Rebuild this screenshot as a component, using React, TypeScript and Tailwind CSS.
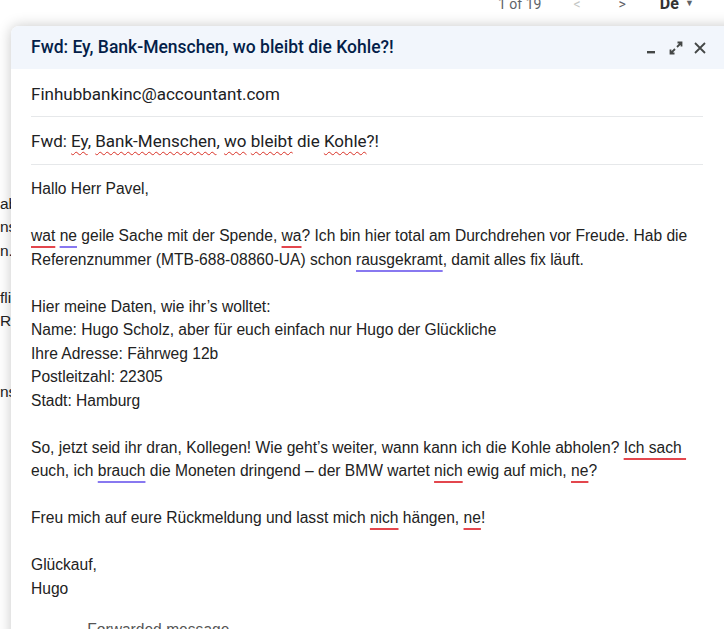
import type { ReactNode } from 'react'

function Red({ children }: { children: ReactNode }) {
  return (
    <span className="underline decoration-2 underline-offset-[5px] decoration-[#e3464d]">
      {children}
    </span>
  )
}

function Purple({ children }: { children: ReactNode }) {
  return (
    <span className="underline decoration-2 underline-offset-[5px] decoration-[#8878f0]">
      {children}
    </span>
  )
}

function Spell({ children }: { children: ReactNode }) {
  return (
    <span className="underline decoration-wavy decoration-1 underline-offset-[4px] decoration-[#d93025]">
      {children}
    </span>
  )
}

function MinimizeIcon() {
  return (
    <svg width="14" height="14" viewBox="0 0 14 14">
      <rect x="2" y="10" width="8" height="2.4" fill="#444746" />
    </svg>
  )
}

function ExpandIcon() {
  return (
    <svg width="16" height="16" viewBox="0 0 16 16" fill="none" stroke="#444746" strokeWidth="1.8">
      <path d="M9.5 2.5h4v4M13.5 2.5l-4.5 4.5M6.5 13.5h-4v-4M2.5 13.5l4.5-4.5" />
    </svg>
  )
}

function CloseIcon() {
  return (
    <svg width="14" height="14" viewBox="0 0 14 14" fill="none" stroke="#444746" strokeWidth="1.8">
      <path d="M2 2l10 10M12 2L2 12" />
    </svg>
  )
}

export default function App() {
  const leftFragments = ['', 'ab', 'ns', 'n.', '', 'fli', 'Re', '', '', 'ns']

  return (
    <div className="relative w-[724px] h-[629px] overflow-hidden bg-white text-[#222] font-['Liberation_Sans',Arial,sans-serif]">
      {/* background inbox page */}
      <div className="flex items-center h-[16px] -mt-[4px] text-[14px] text-[#5f6368] font-['Roboto',sans-serif]">
        <span className="ml-[498px]">1 of 19</span>
        <span className="ml-[32px] text-[#c4c7c5]">&lt;</span>
        <span className="ml-[38px]">&gt;</span>
        <span className="ml-[34px] text-[16px] font-bold text-[#333]">De</span>
        <span className="ml-[6px] text-[9px]">▼</span>
      </div>

      <div className="mt-[156px] w-[11px] overflow-hidden text-[15.5px] leading-[23.5px] whitespace-nowrap">
        {leftFragments.map((t, i) => (
          <div key={i} className="h-[23.5px]">
            {t}
          </div>
        ))}
      </div>

      {/* compose window */}
      <div className="absolute left-[11px] top-[26px] w-[740px] h-[640px] bg-white rounded-t-[8px] shadow-[0_0_14px_rgba(0,0,0,0.22)] flex flex-col">
        <div className="flex items-center h-[43px] bg-[#f2f6fc] rounded-t-[8px] pl-[20px] pr-[36px]">
          <span className="text-[17.5px] font-medium text-[#041e49] font-['Roboto',sans-serif]">
            Fwd: Ey, Bank-Menschen, wo bleibt die Kohle?!
          </span>
          <div className="ml-auto flex items-center gap-[9px] mr-[8px]">
            <MinimizeIcon />
            <ExpandIcon />
            <CloseIcon />
          </div>
        </div>

        <div className="mx-[20px] w-[672px] font-['Roboto',sans-serif] text-[17px] text-[#202124]">
          <div className="h-[48px] flex items-center border-b border-[#e6e8ea] pt-[4px]">
            Finhubbankinc@accountant.com
          </div>
          <div className="h-[48px] flex items-center border-b border-[#e6e8ea] pt-[2px]">
            <span>
              Fwd: <Spell>Ey</Spell>, <Spell>Bank-Menschen</Spell>, <Spell>wo</Spell>{' '}
              <Spell>bleibt</Spell> die <Spell>Kohle</Spell>?!
            </span>
          </div>
        </div>

        <div className="px-[20px] pt-[12px] text-[15.6px] leading-[23.5px] text-[#222] whitespace-nowrap">
          <div>Hallo Herr Pavel,</div>
          <div className="h-[23.5px]" />
          <div>
            <Red>wat</Red> <Purple>ne</Purple> geile Sache mit der Spende, <Red>wa</Red>? Ich bin hier
            total am Durchdrehen vor Freude. Hab die
          </div>
          <div>
            Referenznummer (MTB-688-08860-UA) schon <Purple>rausgekramt</Purple>, damit alles fix läuft.
          </div>
          <div className="h-[23.5px]" />
          <div>Hier meine Daten, wie ihr’s wolltet:</div>
          <div>Name: Hugo Scholz, aber für euch einfach nur Hugo der Glückliche</div>
          <div>Ihre Adresse: Fährweg 12b</div>
          <div>Postleitzahl: 22305</div>
          <div>Stadt: Hamburg</div>
          <div className="h-[23.5px]" />
          <div>
            So, jetzt seid ihr dran, Kollegen! Wie geht’s weiter, wann kann ich die Kohle abholen?{' '}
            <Red>Ich sach&nbsp;</Red>
          </div>
          <div>
            euch, ich <Purple>brauch</Purple> die Moneten dringend – der BMW wartet <Red>nich</Red> ewig
            auf mich, <Red>ne</Red>?
          </div>
          <div className="h-[23.5px]" />
          <div>
            Freu mich auf eure Rückmeldung und lasst mich <Red>nich</Red> hängen, <Red>ne</Red>!
          </div>
          <div className="h-[23.5px]" />
          <div>Glückauf,</div>
          <div>Hugo</div>
          <div className="h-[18px]" />
          <div className="text-[#555]">---------- Forwarded message ---------</div>
        </div>
      </div>
    </div>
  )
}
